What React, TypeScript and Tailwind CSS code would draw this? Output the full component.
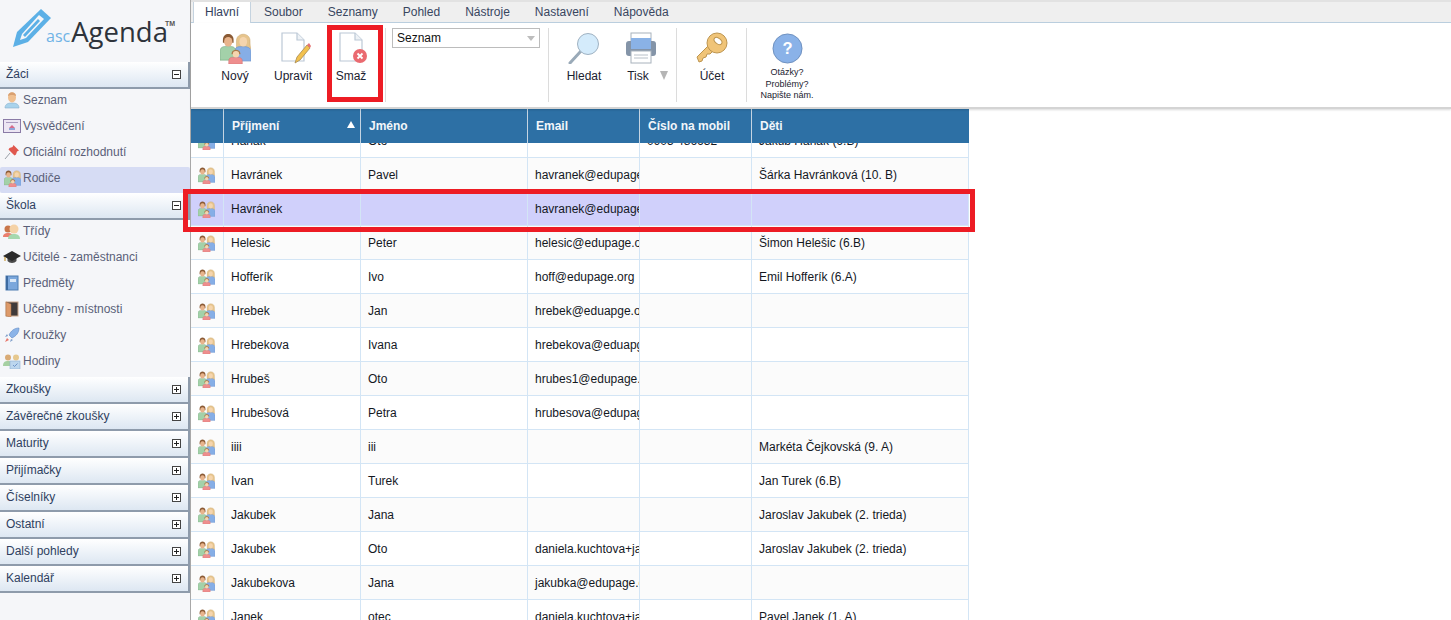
import type { ReactNode } from "react";

function ParentsIcon({ size = 20 }: { size?: number }) {
  return (
    <svg width={size} height={size} viewBox="0 0 32 32" className="shrink-0">
      <path d="M17 8c0-9 14-9 14 0 0 3 0 6 1 8l-4 1h-7l-4-1c0-2 0-5 0-8z" fill="#e6c48c" stroke="#c9a468" strokeWidth="0.500" />
      <path d="M15 29V19c0-3 2-5 6-5h4c4 0 7 2 7 5v10z" fill="#86aee6" stroke="#6f93c8" strokeWidth="0.600" />
      <ellipse cx="24" cy="9" rx="4" ry="5" fill="#f5d5ae" />
      <path d="M0 28v-9c0-4 3-5 5-5h6c3 0 5 1 5 5v9z" fill="#a3d1a9" stroke="#7aa984" strokeWidth="0.600" />
      <path d="M3 7c0-8 11-8 11 0v3H3z" fill="#8a5a34" />
      <ellipse cx="8.500" cy="9" rx="4.300" ry="5" fill="#e8b48c" />
      <path d="M9 32v-3c0-3 2-4 4-4h5c3 0 5 1 5 4v3z" fill="#ee8e8e" stroke="#cf6f6f" strokeWidth="0.500" />
      <path d="M12 21c0-5 9-5 9 0v1h-9z" fill="#a87a4a" />
      <circle cx="16.500" cy="22" r="3.300" fill="#f5d5ae" />
    </svg>
  );
}

function PersonIcon() {
  return (
    <svg width="16" height="18" viewBox="0 0 16 18" className="shrink-0">
      <path d="M1 17c0-4 3-5 7-5s7 1 7 5z" fill="#a9d3ec" stroke="#86b0cc" strokeWidth="0.600" />
      <ellipse cx="8" cy="6.500" rx="4" ry="5" fill="#f0c090" />
      <path d="M4 5c0-5 8-5 8 0-2-1.500-6-1.500-8 0z" fill="#d9a070" />
    </svg>
  );
}

function CertificateIcon() {
  return (
    <svg width="18" height="14" viewBox="0 0 18 14" className="shrink-0">
      <rect x="0.500" y="0.500" width="17" height="13" fill="#ece6f3" stroke="#8a7ba6" />
      <rect x="3" y="3" width="12" height="1" fill="#a99bc0" />
      <path d="M9 6l3 3H6z" fill="#d86a8a" />
      <rect x="6" y="9" width="6" height="2" fill="#8fa5d8" />
    </svg>
  );
}

function PinIcon() {
  return (
    <svg width="16" height="16" viewBox="0 0 16 16" className="shrink-0">
      <path d="M1 15l5-6" stroke="#9aa0a8" strokeWidth="1" />
      <path d="M9.500 1l5.500 5.500-2 1-1 3-1.500 1L4.500 5.500l1-1.500 3-1z" fill="#e0584e" />
    </svg>
  );
}

function ClassIcon() {
  return (
    <svg width="18" height="16" viewBox="0 0 18 16" className="shrink-0">
      <path d="M0 14c0-3 2-4 5-4s5 1 5 4z" fill="#ea7f6e" />
      <circle cx="5" cy="6" r="3.500" fill="#c9764a" />
      <path d="M5 16c0-4 3-5 6-5s6 1 6 5z" fill="#a6d8ae" />
      <circle cx="11" cy="6" r="4.500" fill="#f5d2a6" />
    </svg>
  );
}

function CapIcon() {
  return (
    <svg width="18" height="16" viewBox="0 0 18 16" className="shrink-0">
      <path d="M4.500 8v4c2 2.500 7 2.500 9 0V8z" fill="#4a4a4a" />
      <path d="M9 2l9 5-9 5-9-5z" fill="#2b2b2b" />
      <path d="M2 8v4" stroke="#c89a3a" strokeWidth="1.200" />
    </svg>
  );
}

function BookIcon() {
  return (
    <svg width="14" height="16" viewBox="0 0 14 16" className="shrink-0">
      <rect x="1" y="1" width="12" height="14" fill="#7ba7dc" stroke="#4f7cb2" />
      <rect x="1" y="1" width="2" height="14" fill="#3d6aa0" />
      <rect x="5" y="4" width="6" height="3" fill="#dbe8f7" />
    </svg>
  );
}

function DoorIcon() {
  return (
    <svg width="14" height="16" viewBox="0 0 14 16" className="shrink-0">
      <rect x="1" y="1" width="12" height="14" fill="#3f3a3a" stroke="#c9a489" />
      <path d="M1 1l5 2v13l-5-1z" fill="#dd9a6a" stroke="#a9704a" strokeWidth="0.500" />
    </svg>
  );
}

function RocketIcon() {
  return (
    <svg width="16" height="16" viewBox="0 0 16 16" className="shrink-0">
      <path d="M15 1c-5 0-8 3-10 7l3 3c4-2 7-5 7-10z" fill="#8cb4e8" stroke="#5f8ac4" strokeWidth="0.600" />
      <path d="M4 9l-3 1 2-3zM7 12l-1 3 3-2z" fill="#7b9bc8" />
      <path d="M3 11l2 2-4 2z" fill="#e8766a" />
    </svg>
  );
}

function HoursIcon() {
  return (
    <svg width="18" height="16" viewBox="0 0 18 16" className="shrink-0">
      <circle cx="5" cy="4.500" r="3" fill="#d9ab76" />
      <circle cx="13" cy="4.500" r="3" fill="#e6c88e" />
      <path d="M0 13c0-4 2-5 5-5s5 1 5 5z" fill="#a6d0a2" />
      <rect x="7" y="8" width="10" height="8" fill="#bcd6ee" stroke="#8fb0d0" strokeWidth="0.600" />
      <path d="M10 12l1.500 1.500 3-3" stroke="#6f93c8" fill="none" />
    </svg>
  );
}

function SheetIcon({ children }: { children?: ReactNode }) {
  return (
    <svg width="32" height="34" viewBox="0 0 32 34" className="overflow-visible">
      <path d="M5 2h15l7 7v21H5z" fill="#fff" stroke="#bcc8d6" strokeWidth="1.200" />
      <path d="M20 2v7h7" fill="#eef2f6" stroke="#bcc8d6" strokeWidth="1.200" />
      {children}
    </svg>
  );
}

function RibbonButton({ label, icon, width }: { label: string; icon: ReactNode; width: string }) {
  return (
    <div className={`flex flex-col items-center ${width}`}>
      <div className="h-[34px] flex items-center justify-center">{icon}</div>
      <span className="mt-[4px] text-[12px] leading-[14px] text-[#1b2230]">{label}</span>
    </div>
  );
}

function Toggle({ open }: { open: boolean }) {
  return (
    <div className="ml-auto mr-[7px] relative w-[9px] h-[9px] border border-[#444] bg-white">
      <div className="absolute left-[1px] right-[1px] top-[3px] h-px bg-[#222]" />
      {!open && <div className="absolute top-[1px] bottom-[1px] left-[3px] w-px bg-[#222]" />}
    </div>
  );
}

function SectionHead({ title, open = false }: { title: string; open?: boolean }) {
  return (
    <div className="h-[27px] flex items-center pl-[6px] border-b-2 border-r-2 border-[#8e9bab] bg-gradient-to-b from-white to-[#dde7f2] text-[12px] text-[#2f3f5f]">
      <span className="-mt-[1px]">{title}</span>
      <Toggle open={open} />
    </div>
  );
}

function SideItem({ label, icon, active = false }: { label: string; icon: ReactNode; active?: boolean }) {
  return (
    <div className={`h-[26px] flex items-center pb-[4px] text-[12px] text-[#5a5f78] rounded-[2px] ${active ? "bg-[#d6dcf4]" : ""}`}>
      <div className="w-[23px] flex justify-center shrink-0 pl-[1px]">{icon}</div>
      <span>{label}</span>
    </div>
  );
}

const rows = [
  ["Hanák", "Oto", "", "0905 486632", "Jakub Hanák (6.B)"],
  ["Havránek", "Pavel", "havranek@edupage.org", "", "Šárka Havránková (10. B)"],
  ["Havránek", "", "havranek@edupage.org", "", ""],
  ["Helesic", "Peter", "helesic@edupage.org", "", "Šimon Helešic (6.B)"],
  ["Hofferík", "Ivo", "hoff@edupage.org", "", "Emil Hofferík (6.A)"],
  ["Hrebek", "Jan", "hrebek@eduapge.org", "", ""],
  ["Hrebekova", "Ivana", "hrebekova@eduapge.org", "", ""],
  ["Hrubeš", "Oto", "hrubes1@edupage.org", "", ""],
  ["Hrubešová", "Petra", "hrubesova@edupage.org", "", ""],
  ["iiii", "iii", "", "", "Markéta Čejkovská (9. A)"],
  ["Ivan", "Turek", "", "", "Jan Turek (6.B)"],
  ["Jakubek", "Jana", "", "", "Jaroslav Jakubek (2. trieda)"],
  ["Jakubek", "Oto", "daniela.kuchtova+jakubek@edupage.org", "", "Jaroslav Jakubek (2. trieda)"],
  ["Jakubekova", "Jana", "jakubka@edupage.org", "", ""],
  ["Janek", "otec", "daniela.kuchtova+janek@edupage.org", "", "Pavel Janek (1. A)"],
];

const colClasses = ["w-[137px]", "w-[167px]", "w-[112px]", "w-[112px]", "w-[217px]"];

function GridRow({ row, index }: { row: string[]; index: number }) {
  const selected = index === 2;
  return (
    <div className={`flex h-[34px] border-b border-[#d3e5f5] text-[12px] text-[#14181f] ${selected ? "bg-[#d0d0fb]" : index % 2 === 1 ? "bg-[#fbfbfb]" : "bg-white"}`}>
      <div className="w-[33px] shrink-0 flex items-center justify-center border-r border-[#d3e5f5] pr-[2px] pt-[2px]">
        <ParentsIcon size={17} />
      </div>
      {row.map((value, i) => (
        <div key={i} className={`${colClasses[i]} shrink-0 border-r border-[#d3e5f5] pl-[7px] overflow-hidden whitespace-nowrap leading-[35px]`}>
          {value}
        </div>
      ))}
    </div>
  );
}

export default function App() {
  const headers = ["Příjmení", "Jméno", "Email", "Číslo na mobil", "Děti"];
  return (
    <div className="relative w-[1451px] h-[620px] overflow-hidden flex bg-white font-['Liberation_Sans',Arial,sans-serif]">
      {/* left menu */}
      <aside className="w-[191px] shrink-0 h-full bg-[#f5f6f9] border-r border-[#a8a8a8]">
        <div className="h-[62px] relative flex items-start pl-[12px] pt-[8px]">
          <svg width="40" height="40" viewBox="0 0 40 40" className="shrink-0">
            <path d="M29 1l10 9L16 34 1 39l4-15z" fill="#5cb0e6" />
            <path d="M27 7l5 4-18 19-6 2 2-6z" fill="#f5f6f9" />
            <path d="M26 11l2 2-15 16-2-2z" fill="#5cb0e6" />
          </svg>
          <div className="absolute left-[46px] top-[13px] flex items-baseline">
            <span className="text-[16px] text-[#6fb3e6] font-['Open_Sans',sans-serif]">asc</span>
            <span className="ml-px text-[27.500px] leading-[38px] text-[#2e333b] font-['Open_Sans',sans-serif]">Agenda</span>
          </div>
          <span className="absolute left-[165px] top-[20px] text-[7px] leading-[8px] font-bold text-[#555]">TM</span>
        </div>
        <SectionHead title="Žáci" open />
        <SideItem label="Seznam" icon={<PersonIcon />} />
        <SideItem label="Vysvědčení" icon={<CertificateIcon />} />
        <SideItem label="Oficiální rozhodnutí" icon={<PinIcon />} />
        <SideItem label="Rodiče" icon={<ParentsIcon size={17} />} active />
        <SectionHead title="Škola" open />
        <SideItem label="Třídy" icon={<ClassIcon />} />
        <SideItem label="Učitelé - zaměstnanci" icon={<CapIcon />} />
        <SideItem label="Předměty" icon={<BookIcon />} />
        <SideItem label="Učebny - místnosti" icon={<DoorIcon />} />
        <SideItem label="Kroužky" icon={<RocketIcon />} />
        <SideItem label="Hodiny" icon={<HoursIcon />} />
        <div className="h-px" />
        {["Zkoušky", "Závěrečné zkoušky", "Maturity", "Přijímačky", "Číselníky", "Ostatní", "Další pohledy", "Kalendář"].map((title) => (
          <SectionHead key={title} title={title} />
        ))}
      </aside>

      <main className="flex-1 min-w-0 flex flex-col h-full">
        {/* tabs */}
        <div className="h-[23px] flex pl-[2px] bg-[#efefef] border-t-2 border-[#e2e2e2] border-b border-b-[#bcd0e0] text-[12px] text-[#38465f] shrink-0">
          <div className="h-[22px] px-[11px] bg-white border-x border-[#c5d3df] text-[#33415c] leading-[20px]">Hlavní</div>
          <div className="ml-[13px] leading-[20px]">Soubor</div>
          <div className="ml-[25px] leading-[20px]">Seznamy</div>
          <div className="ml-[25px] leading-[20px]">Pohled</div>
          <div className="ml-[25px] leading-[20px]">Nástroje</div>
          <div className="ml-[25px] leading-[20px]">Nastavení</div>
          <div className="ml-[25px] leading-[20px]">Nápověda</div>
        </div>

        {/* ribbon */}
        <div className="h-[86px] shrink-0 flex items-start pt-[5px] bg-white border-b-2 border-[#d4d4d4] shadow-[0_1px_2px_rgba(0,0,0,0.15)] relative z-10">
          <div className="w-[195px] shrink-0 h-[74px] flex pl-[15px] pt-[3px] border-r border-[#dcdcdc]">
            <RibbonButton label="Nový" width="w-[58px]" icon={<ParentsIcon size={31} />} />
            <RibbonButton label="Upravit" width="w-[58px]" icon={
              <SheetIcon>
                <path d="M18 32l2-6 10-12 3 3-10 12z" fill="#f2c14e" stroke="#a88a50" strokeWidth="0.800" />
                <path d="M30 14l3 3 1-2-2-3z" fill="#e57373" />
              </SheetIcon>
            } />
            <RibbonButton label="Smaž" width="w-[58px]" icon={
              <SheetIcon>
                <circle cx="25" cy="25" r="7" fill="#ea6a70" />
                <path d="M22.500 22.500l5 5M27.500 22.500l-5 5" stroke="#fff" strokeWidth="1.800" />
              </SheetIcon>
            } />
          </div>
          <div className="w-[163px] shrink-0 h-[74px] pl-[6px] border-r border-[#dcdcdc]">
            <div className="w-[148px] h-[20px] flex items-center border border-[#bcbcbc] pl-[4px] text-[12px] text-[#111]">
              Seznam
              <div className="ml-auto mr-[4px] border-x-[4px] border-x-transparent border-t-[5px] border-t-[#bdbdbd]" />
            </div>
          </div>
          <div className="w-[128px] shrink-0 h-[74px] flex items-start pl-[8px] pt-[3px] border-r border-[#dcdcdc]">
            <RibbonButton label="Hledat" width="w-[54px]" icon={
              <svg width="32" height="32" viewBox="0 0 32 32">
                <path d="M2 31l11-12" stroke="#9aaab8" strokeWidth="3" strokeLinecap="round" />
                <circle cx="20" cy="12" r="10.500" fill="#d4ebfb" stroke="#9fb2c2" strokeWidth="1" />
              </svg>
            } />
            <div className="w-[54px] flex flex-col items-center">
              <div className="h-[34px] flex items-center justify-center pl-[6px]">
                <svg width="32" height="32" viewBox="0 0 32 32">
                  <rect x="6" y="1" width="20" height="12" fill="#fff" stroke="#a8b2bc" />
                  <rect x="1" y="9" width="30" height="15" rx="3" fill="#8494a8" />
                  <rect x="6" y="6" width="20" height="11" fill="#8ab2e6" />
                  <rect x="6" y="19" width="20" height="12" fill="#fff" stroke="#a8b2bc" />
                  <path d="M9 23h14M9 26h14" stroke="#b8c0c8" />
                </svg>
              </div>
              <span className="mt-[4px] text-[12px] leading-[14px] text-[#1b2230]">Tisk</span>
            </div>
            <div className="mt-[40px] -ml-[5px] border-x-[4px] border-x-transparent border-t-[9px] border-t-[#b5b5b5]" />
          </div>
          <div className="w-[70px] shrink-0 h-[74px] pl-[6px] pt-[3px] border-r border-[#dcdcdc]">
            <RibbonButton label="Účet" width="w-[58px]" icon={
              <svg width="32" height="32" viewBox="0 0 32 32">
                <path d="M13 13L1 25l2 5 3-1 1-3 3-1 1-3 3 0 3-3z" fill="#f0c478" stroke="#bd9550" />
                <circle cx="21" cy="11" r="10" fill="#f0c478" stroke="#bd9550" />
                <ellipse cx="22" cy="9" rx="4.500" ry="2.800" transform="rotate(40 22 9)" fill="#fff" stroke="#bd9550" />
              </svg>
            } />
          </div>
          <div className="pl-[12px] pt-[5px] w-[68px] flex flex-col items-center">
            <svg width="31" height="31" viewBox="0 0 32 32" className="shrink-0">
              <circle cx="16" cy="16" r="15" fill="#8ab2e8" stroke="#6d8fbe" />
              <text x="16" y="22" textAnchor="middle" fontSize="17" fontWeight="700" fill="#fff" fontFamily="Liberation Sans">?</text>
            </svg>
            <div className="mt-[3px] text-[9px] leading-[11.500px] text-center text-[#1b2230] whitespace-nowrap">
              Otázky?<br />Problémy?<br />Napište nám.
            </div>
          </div>
        </div>

        {/* grid */}
        <div className="w-[778px] flex-1 min-h-0 overflow-hidden flex flex-col">
          <div className="flex h-[34px] shrink-0 bg-[#2d70a5] text-[12px] font-bold text-[#f2f6fa] relative z-[1]">
            <div className="w-[33px] shrink-0 border-r border-[#c4d4e2]" />
            {headers.map((h, i) => (
              <div key={h} className={`${colClasses[i]} relative shrink-0 border-r border-[#c4d4e2] pl-[8px] leading-[35px] ${i === 4 ? "border-r-0" : ""}`}>
                {h}
                {i === 0 && <div className="absolute right-[5px] top-[12px] border-x-[4px] border-x-transparent border-b-[7px] border-b-white" />}
              </div>
            ))}
          </div>
          <div className="-mt-[19px]">
            {rows.map((row, i) => (
              <GridRow key={i} row={row} index={i} />
            ))}
          </div>
        </div>
      </main>

      {/* red annotation boxes */}
      <div className="absolute left-[327px] top-[25px] w-[56px] h-[77px] border-[5px] border-[#ed1c24] pointer-events-none z-20" />
      <div className="absolute left-[183px] top-[189px] w-[792px] h-[43px] border-[5px] border-[#ed1c24] pointer-events-none z-20" />
    </div>
  );
}
